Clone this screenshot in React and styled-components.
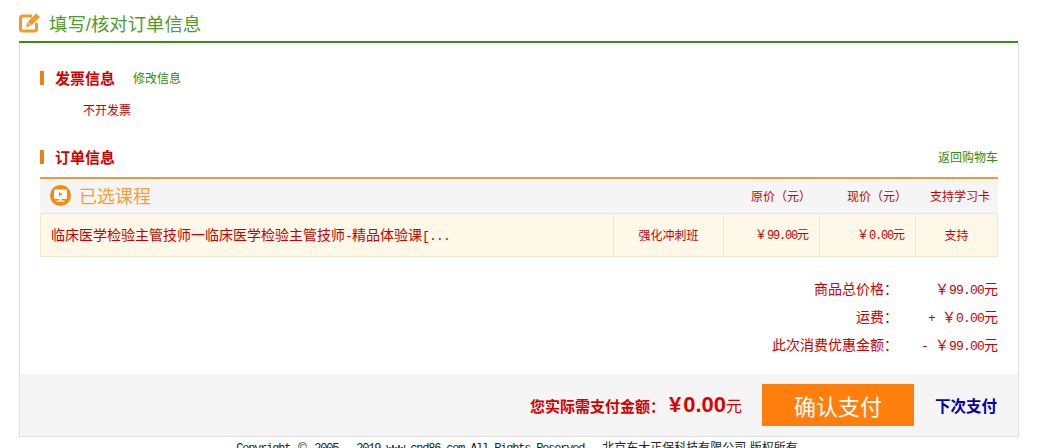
import React from 'react';
import styled, { createGlobalStyle } from 'styled-components';

const GlobalStyle = createGlobalStyle`
  html, body {
    margin: 0;
    padding: 0;
    height: 448px;
    overflow: hidden;
    background: #fff;
    font-family: "Liberation Sans", "Noto Sans CJK SC", sans-serif;
  }
  * { box-sizing: border-box; }
`;

const Page = styled.div`
  width: 1000px;
  margin-left: 19px;
  height: 448px;
  overflow: hidden;
`;

const TitleBar = styled.div`
  display: flex;
  align-items: center;
  gap: 8px;
  height: 43px;
  padding-top: 5px;
  margin-right: 1px;
  border-bottom: 2px solid #3d8a17;
  font-size: 18.4px;
  color: #4f9a2a;
`;

const Panel = styled.div`
  border: 1px solid #e0e0e0;
  border-top: 0;
  height: 394px;
  display: flex;
  flex-direction: column;
`;

const Body = styled.div`
  flex: 1;
  padding: 0 20px;
`;

const SectionHead = styled.div`
  display: flex;
  align-items: center;
  height: 14px;
  margin-top: ${(p) => p.$top}px;
  padding: 0 0 2px 11px;
  border-left: 4px solid #ee7f14;
  font-size: 15px;
  font-weight: bold;
  color: #d40000;
`;

const SideLink = styled.a`
  font-size: 12px;
  font-weight: normal;
  color: #2f8a10;
  margin-left: ${(p) => (p.$right ? 'auto' : '18px')};
`;

const Note = styled.div`
  margin: 19px 0 0 43px;
  font-size: 12px;
  line-height: 14px;
  color: #c00000;
`;

const Table = styled.div`
  margin-top: 13px;
  border-top: 2px solid #e89a3c;
`;

const columns = '573px 110px 96px 96px 1fr';

const HeadRow = styled.div`
  display: grid;
  grid-template-columns: ${columns};
  height: 34px;
  padding-bottom: 2px;
  align-items: center;
  background: #f5f5f5;
  font-size: 12px;
  color: #c80000;
`;

const CourseTitle = styled.div`
  display: flex;
  align-items: center;
  gap: 8px;
  padding-left: 10px;
  font-size: 18px;
  color: #f0a040;
`;

const HeadCell = styled.div`
  text-align: right;
  padding-right: 8px;
`;

const BodyRow = styled.div`
  display: grid;
  grid-template-columns: ${columns};
  height: 44px;
  background: #fef8e8;
  border-top: 1px solid #f3e6c8;
  border-bottom: 1px solid #f3e6c8;
  font-size: 12px;
  color: #c80000;
`;

const Cell = styled.div`
  display: flex;
  align-items: center;
  justify-content: ${(p) => p.$align || 'center'};
  padding: 0 10px 2px;
  border-left: 1px solid #f3e6c8;
  border-right: ${(p) => (p.$last ? '1px solid #f3e6c8' : '0')};
  font-size: ${(p) => p.$size || 12}px;
  white-space: pre;
`;

// Latin text in the reference is a half-width bitmap face, so the advance is fixed
const Mono = styled.span`
  font-family: "Liberation Mono", "Noto Sans CJK SC", monospace;
  font-size: ${(p) => (p.$large ? 13 : 12)}px;
  letter-spacing: ${(p) => (p.$large ? -0.8 : -1.2)}px;
  white-space: pre;
`;

const Summary = styled.div`
  margin-top: 17px;
`;

const SummaryRow = styled.div`
  display: grid;
  grid-template-columns: 1fr 100px;
  height: 28px;
  align-items: center;
  font-size: 14px;
  color: #c80000;
  text-align: right;
`;

const Footer = styled.div`
  display: flex;
  align-items: center;
  justify-content: flex-end;
  height: 62px;
  padding-right: 21px;
  background: #f5f5f5;
`;

const PayLabel = styled.span`
  font-size: 15px;
  font-weight: bold;
  color: #d40000;
`;

const PayAmount = styled.span`
  font-size: 22px;
  font-weight: bold;
  color: #e00000;
`;

const PayYen = styled.span`
  margin: 0 2px 0 4px;
`;

const PayUnit = styled.span`
  font-size: 16px;
  color: #d40000;
  margin-right: 20px;
`;

const PayButton = styled.button`
  width: 152px;
  height: 42px;
  border: 0;
  background: #ff7f0e;
  color: #fff;
  font-family: inherit;
  font-size: 22px;
`;

const LaterLink = styled.a`
  margin-left: 21px;
  font-size: 15.5px;
  font-weight: bold;
  color: #0000b0;
`;

const Copyright = styled.div`
  margin-top: 4px;
  padding-right: 4px;
  text-align: center;
  font-size: 12px;
  line-height: 14px;
  color: #222;
`;

const CopyMark = styled.span`
  display: inline-block;
  width: 12px;
  text-align: center;
`;

const EditIcon = () => (
  <svg width="22" height="20" viewBox="0 0 22 20">
    <path d="M13 3H3.5A2 2 0 0 0 1.5 5v11a2 2 0 0 0 2 2h12a2 2 0 0 0 2-2V10" fill="none" stroke="#f59a23" strokeWidth="3" />
    <path d="M7 14l1.5-5L17 0.5l4 3.5L12.5 12.5z" fill="#f59a23" />
    <path d="M8.5 9l4 3.5" stroke="#fff" strokeWidth="1" />
  </svg>
);

const ScreenIcon = () => (
  <svg width="21" height="21" viewBox="0 0 21 21">
    <circle cx="10.5" cy="10.5" r="10.5" fill="#f58a0b" />
    <rect x="4" y="4.5" width="13" height="9.5" rx="1" fill="#fff" />
    <path d="M9 7l3.6 2.3L9 11.6z" fill="#f58a0b" />
    <rect x="9.5" y="14" width="2" height="1.5" fill="#fff" />
    <rect x="6.5" y="15.5" width="8" height="1.3" fill="#fff" />
  </svg>
);

const App = () => (
  <Page>
    <GlobalStyle />
    <TitleBar>
      <EditIcon />
      填写/核对订单信息
    </TitleBar>
    <Panel>
      <Body>
        <SectionHead $top={28}>
          发票信息
          <SideLink>修改信息</SideLink>
        </SectionHead>
        <Note>不开发票</Note>
        <SectionHead $top={32}>
          订单信息
          <SideLink $right>返回购物车</SideLink>
        </SectionHead>
        <Table>
          <HeadRow>
            <CourseTitle>
              <ScreenIcon />
              已选课程
            </CourseTitle>
            <span />
            <HeadCell>原价（元）</HeadCell>
            <HeadCell>现价（元）</HeadCell>
            <HeadCell>支持学习卡</HeadCell>
          </HeadRow>
          <BodyRow>
            <Cell $align="flex-start" $size={14}>
              <span>临床医学检验主管技师一临床医学检验主管技师<Mono $large>-</Mono>精品体验课<Mono $large>[...</Mono></span>
            </Cell>
            <Cell>强化冲刺班</Cell>
            <Cell $align="flex-end"><span>￥<Mono>99.00</Mono>元</span></Cell>
            <Cell $align="flex-end"><span>￥<Mono>0.00</Mono>元</span></Cell>
            <Cell $last>支持</Cell>
          </BodyRow>
        </Table>
        <Summary>
          <SummaryRow>
            <span>商品总价格：</span>
            <span>￥<Mono $large>99.00</Mono>元</span>
          </SummaryRow>
          <SummaryRow>
            <span>运费：</span>
            <span><Mono $large>+ </Mono>￥<Mono $large>0.00</Mono>元</span>
          </SummaryRow>
          <SummaryRow>
            <span>此次消费优惠金额：</span>
            <span><Mono $large>- </Mono>￥<Mono $large>99.00</Mono>元</span>
          </SummaryRow>
        </Summary>
      </Body>
      <Footer>
        <PayLabel>您实际需支付金额：</PayLabel>
        <PayAmount><PayYen>¥</PayYen>0.00</PayAmount>
        <PayUnit>元</PayUnit>
        <PayButton>确认支付</PayButton>
        <LaterLink>下次支付</LaterLink>
      </Footer>
    </Panel>
    <Copyright>
      <Mono>Copyright </Mono>
      <CopyMark>©</CopyMark>
      <Mono> 2005 - 2019 www.cnd86.com All Rights Reserved.  </Mono>
      北京东大正保科技有限公司 版权所有
    </Copyright>
  </Page>
);

export default App;
